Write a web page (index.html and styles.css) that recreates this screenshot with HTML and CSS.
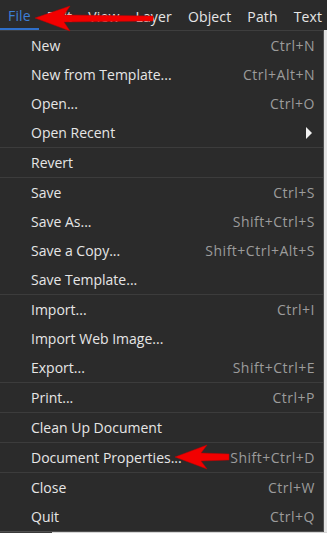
FILE: index.html
```html
<!DOCTYPE html>
<html lang="en">
<head>
    <meta charset="UTF-8">
    <meta name="viewport" content="width=device-width, initial-scale=1.0">
    <title>File Menu</title>
    <link rel="stylesheet" href="styles.css">
</head>
<body>
    <div class="menubar">
        <span class="menubar-item active">File</span>
        <span class="menubar-item">Edit</span>
        <span class="menubar-item">View</span>
        <span class="menubar-item">Layer</span>
        <span class="menubar-item">Object</span>
        <span class="menubar-item">Path</span>
        <span class="menubar-item">Text</span>
    </div>

    <div class="menu">
        <div class="menu-row"><span>New</span><span class="shortcut">Ctrl+N</span></div>
        <div class="menu-row"><span>New from Template...</span><span class="shortcut">Ctrl+Alt+N</span></div>
        <div class="menu-row"><span>Open...</span><span class="shortcut">Ctrl+O</span></div>
        <div class="menu-row"><span>Open Recent</span><span class="submenu-arrow"></span></div>
        <div class="separator"></div>
        <div class="menu-row"><span>Revert</span></div>
        <div class="separator"></div>
        <div class="menu-row"><span>Save</span><span class="shortcut">Ctrl+S</span></div>
        <div class="menu-row"><span>Save As...</span><span class="shortcut">Shift+Ctrl+S</span></div>
        <div class="menu-row"><span>Save a Copy...</span><span class="shortcut">Shift+Ctrl+Alt+S</span></div>
        <div class="menu-row"><span>Save Template...</span></div>
        <div class="separator"></div>
        <div class="menu-row"><span>Import...</span><span class="shortcut">Ctrl+I</span></div>
        <div class="menu-row"><span>Import Web Image...</span></div>
        <div class="menu-row"><span>Export...</span><span class="shortcut">Shift+Ctrl+E</span></div>
        <div class="separator"></div>
        <div class="menu-row"><span>Print...</span><span class="shortcut">Ctrl+P</span></div>
        <div class="separator"></div>
        <div class="menu-row"><span>Clean Up Document</span></div>
        <div class="separator"></div>
        <div class="menu-row"><span>Document Properties...</span><span class="shortcut">Shift+Ctrl+D</span></div>
        <div class="separator"></div>
        <div class="menu-row"><span>Close</span><span class="shortcut">Ctrl+W</span></div>
        <div class="menu-row"><span>Quit</span><span class="shortcut">Ctrl+Q</span></div>
    </div>
    <div class="underlay">
        <div class="underlay-dark"></div>
        <div class="underlay-light"></div>
    </div>

    <!-- red annotation arrows drawn over the screenshot -->
    <svg class="annotations" width="327" height="533" viewBox="0 0 327 533">
        <polygon class="arrow" points="35,18 70,6 64,15 153,16 153,21 64,22 70,31"/>
        <polygon class="arrow" points="175,457 207,445 201,453 229,454 229,460 201,461 207,469"/>
    </svg>
</body>
</html>
```

FILE: styles.css
```css
body {
    margin: 0;
    padding: 0;
    width: 327px;
    height: 533px;
    overflow: hidden;
    position: relative;
    font-family: "Open Sans", "Noto Sans", sans-serif;
    font-size: 14px;
    background-color: #e4e4e4;
    color: #e6e6e6;
}

.menubar {
    display: flex;
    height: 30px;
    background-color: #2b2b2b;
}

.menubar-item {
    padding: 4px 8px 0 8px;
    line-height: 26px;
    letter-spacing: 0.15px;
    color: #e6e6e6;
}

.menubar-item.active {
    color: #3d7fd6;
    border-bottom: 2px solid #2f6fc9;
    line-height: 24px;
}

.menu {
    width: 323px;
    background-color: #2b2b2b;
    border-top: 1px solid #3e3e3e;
    border-right: 1px solid #4f4f4f;
    border-bottom: 1px solid #4f4f4f;
}

.menu-row {
    display: flex;
    justify-content: space-between;
    align-items: center;
    height: 29px;
    padding: 0 8px 0 31px;
}

.shortcut {
    color: #9c9c9c;
    letter-spacing: 0.5px;
}

.submenu-arrow {
    width: 0;
    height: 0;
    margin-right: 3px;
    border-top: 6px solid transparent;
    border-bottom: 6px solid transparent;
    border-left: 6px solid #f2f2f2;
}

.separator {
    height: 1px;
    background-color: #3c3c3c;
}

.underlay {
    display: flex;
    height: 2px;
}

.underlay-dark {
    width: 52px;
    background-color: #3a3a3a;
}

.underlay-light {
    flex: 1;
    background-color: #d6d6d6;
}

.annotations {
    position: absolute;
    left: 0;
    top: 0;
    pointer-events: none;
}

.arrow {
    fill: #f20000;
    stroke: #c00000;
    stroke-width: 0.5;
}
```
